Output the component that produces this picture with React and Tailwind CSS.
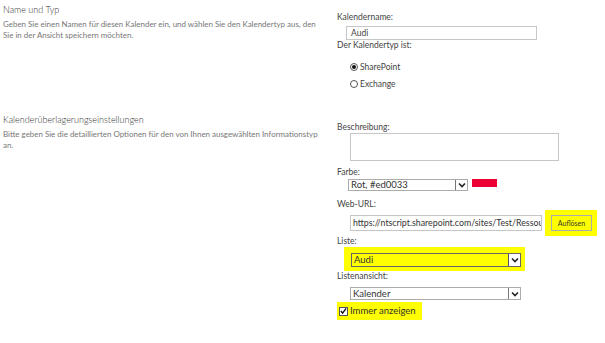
import React from "react";

function Arrow({ dark }) {
  return (
    <div className={`h-full w-[12px] shrink-0 flex items-center justify-center border-l ${dark ? "border-[#555]" : "border-[#777]"} bg-white`}>
      <svg width="8" height="6" viewBox="0 0 8 6">
        <path d="M1 1.5 L4 4.5 L7 1.5" fill="none" stroke="#222" strokeWidth="1.6" />
      </svg>
    </div>
  );
}

function Select({ text, w, h, cls = "", dark }) {
  return (
    <div className={`flex items-stretch border ${dark ? "border-[#666]" : "border-[#ababab]"} bg-white ${cls}`} style={{ width: w, height: h }}>
      <div className="flex-1 pl-[2px] text-[9.5px] leading-none flex items-center text-[#333] overflow-hidden whitespace-nowrap">{text}</div>
      <Arrow dark={dark} />
    </div>
  );
}

export default function App() {
  const font = { fontFamily: "Lato, 'Noto Sans', sans-serif" };
  return (
    <div className="w-[605px] h-[343px] bg-white overflow-hidden text-[#444]" style={font}>
      {/* Row 1 */}
      <div className="flex h-[112px]">
        <div className="w-[334px] pl-[3px]">
          <div className="mt-[4px] text-[9px] font-light leading-[11px] text-[#333]">Name und Typ</div>
          <div className="mt-[4px] text-[7.95px] leading-[11px] text-[#777] whitespace-nowrap">
            <div>Geben Sie einen Namen für diesen Kalender ein, und wählen Sie den Kalendertyp aus, den</div>
            <div>Sie in der Ansicht speichern möchten.</div>
          </div>
        </div>
        <div className="flex-1 pl-[3px] flex flex-col">
          <div className="mt-[12px] text-[8.5px] leading-[11px]">Kalendername:</div>
          <div className="mt-[3px] ml-[9px] w-[191px] h-[14px] border border-[#c6c6c6] flex items-center pl-[4px] text-[8.5px] text-[#444]">Audi</div>
          <div className="mt-0 text-[8.5px] leading-[11px]">Der Kalendertyp ist:</div>
          <div className="mt-[9px] ml-[13px] h-[14px] flex items-center gap-[2px] text-[8.5px]">
            <span className="w-[8px] h-[8px] rounded-full border border-[#555] flex items-center justify-center">
              <span className="w-[4px] h-[4px] rounded-full bg-[#111]" />
            </span>
            SharePoint
          </div>
          <div className="mt-[3px] ml-[13px] h-[14px] flex items-center gap-[2px] text-[8.5px]">
            <span className="w-[8px] h-[8px] rounded-full border border-[#555]" />
            Exchange
          </div>
        </div>
      </div>
      {/* Row 2 */}
      <div className="flex">
        <div className="w-[334px] pl-[3px]">
          <div className="mt-[2px] text-[9px] font-light leading-[11px] text-[#333]">Kalenderüberlagerungseinstellungen</div>
          <div className="mt-[4px] text-[7.95px] leading-[11px] text-[#777] whitespace-nowrap">
            <div>Bitte geben Sie die detaillierten Optionen für den von Ihnen ausgewählten Informationstyp</div>
            <div>an.</div>
          </div>
        </div>
        <div className="flex-1 pl-[3px] flex flex-col">
          <div className="mt-[10px] text-[8.5px] leading-[11px]">Beschreibung:</div>
          <div className="ml-[13px] w-[209px] h-[28px] border border-[#c6c6c6]" />
          <div className="mt-[6px] text-[8.5px] leading-[11px]">Farbe:</div>
          <div className="mt-[1px] ml-[11px] flex items-start gap-[4px]">
            <Select text="Rot, #ed0033" w={120} h={12} />
            <div className="w-[25px] h-[8px] bg-[#ed0033]" />
          </div>
          <div className="mt-[8px] text-[8.5px] leading-[11px]">Web-URL:</div>
          <div className="ml-[13px] flex items-center">
            <div className="w-[192px] h-[16px] border border-[#c6c6c6] flex items-center pl-[2px] text-[8.8px] text-[#333] overflow-hidden whitespace-nowrap">
              https://ntscript.sharepoint.com/sites/Test/Ressources
            </div>
            <div className="ml-[3px] w-[52px] h-[26px] bg-[#ffff00] flex items-center pl-[6px]">
              <div className="w-[41px] h-[16px] border border-[#ababab] flex items-center justify-center text-[7px] text-[#333]">Auflösen</div>
            </div>
          </div>
          <div className="text-[8.5px] leading-[10px] h-[10px]">Liste:</div>
          <div className="mt-[1px] ml-[7px] w-[181px] h-[24px] bg-[#ffff00] pl-[7px] pt-[6px]">
            <Select text="Audi" w={170} h={14} dark cls="!bg-[#ffff00]" />
          </div>
          <div className="text-[8.5px] leading-[11px]">Listenansicht:</div>
          <div className="mt-[5px] ml-[13px]">
            <Select text="Kalender" w={171} h={13} />
          </div>
          <div className="mt-[2px] w-[85px] h-[18px] bg-[#ffff00] flex items-center pl-[2px] gap-[2px] text-[9.5px] text-[#333]">
            <span className="w-[9px] h-[9px] border border-[#555] bg-white flex items-center justify-center">
              <svg width="8" height="8" viewBox="0 0 8 8">
                <path d="M1 4 L3 6.5 L7 1" fill="none" stroke="#111" strokeWidth="1.6" />
              </svg>
            </span>
            Immer anzeigen
          </div>
        </div>
      </div>
    </div>
  );
}
